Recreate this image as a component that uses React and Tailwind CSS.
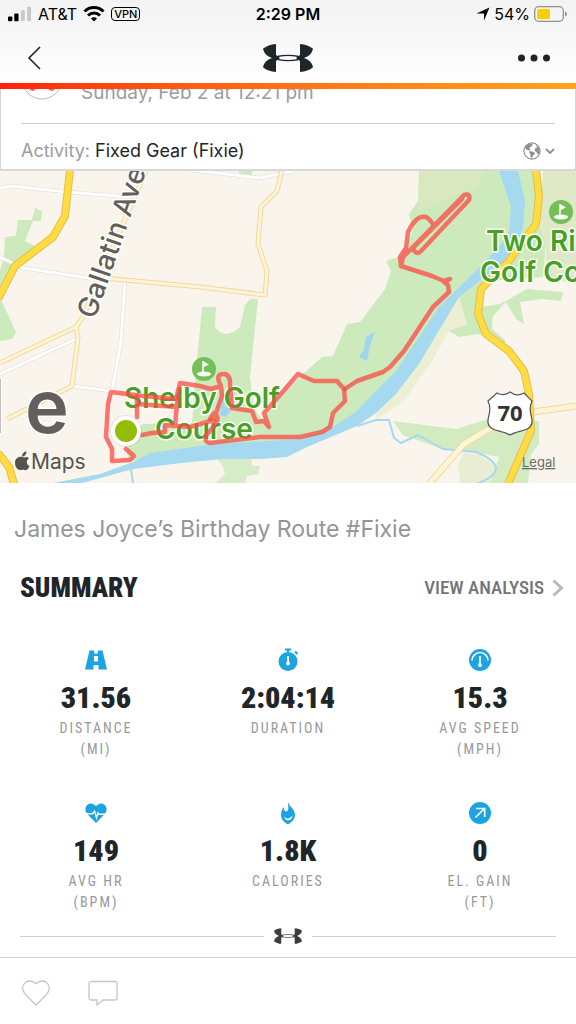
import React, { useState } from 'react';
import { LuHeart } from 'react-icons/lu';

// Under Armour logo, used in the header and in the section divider
const Logo = ({ className }) => (
    <svg viewBox="0 0 50 28" className={className} fill="currentColor" aria-hidden="true">
        <path d="M0 4.800C3.500 1.900 7.500.4 13 0v11l4 3-4 3v11C7.500 27.600 3.500 26.100 0 23.200 1 18.800 4 15.500 9 14 4 12.500 1 9.200 0 4.800Z" />
        <path d="M50 4.800C46.500 1.900 42.500.4 37 0v11l-4 3 4 3v11c5.500-.4 9.500-1.900 13-4.800-1-4.400-4-7.700-9-9.200 5-1.500 8-4.800 9-9.200Z" />
        <ellipse cx="25" cy="14" rx="12" ry="2.600" fill="none" stroke="currentColor" strokeWidth="1.300" />
    </svg>
);

const RoadIcon = () => (
    <svg viewBox="0 0 24 24" className="size-6" fill="#1ca4e2" aria-hidden="true">
        <path d="M5.500 2.500h4.700v3h3.600v-3h4.700l4.500 19h-8.500v-4.500h-5v4.500H1ZM10 8v5.500h4V8Z" fillRule="evenodd" />
    </svg>
);

const StopwatchIcon = () => (
    <svg viewBox="0 0 24 24" className="size-6" fill="none" aria-hidden="true">
        <circle cx="12" cy="13.500" r="9.500" fill="#1ca4e2" />
        <path d="M9 1.500h6M12 1.500v4M19 3.500l2.500 2.500" stroke="#1ca4e2" strokeWidth="2" />
        <path d="M12 8v7" stroke="#fff" strokeWidth="2" />
        <circle cx="12" cy="15.500" r="2" fill="#fff" />
    </svg>
);

const SpeedIcon = () => (
    <svg viewBox="0 0 24 24" className="size-6" fill="none" aria-hidden="true">
        <circle cx="12" cy="12" r="11" fill="#1ca4e2" />
        <path d="M4 12.500a8 8 0 0 1 16 0M12 8v9" stroke="#fff" strokeWidth="1.600" />
        <circle cx="12" cy="17" r="2" fill="#fff" />
    </svg>
);

const HeartRateIcon = () => (
    <svg viewBox="0 0 24 24" className="size-6" aria-hidden="true">
        <path d="M12 22 3.200 13C-1.500 7 4 .5 9.500 3.200L12 5l2.500-1.800C20 .5 25.500 7 20.800 13Z" fill="#1ca4e2" />
        <path d="M0 12.800h8.500l2-2.500 2 6.500 1.500-5 1 1.500H24" fill="none" stroke="#fff" strokeWidth="1.400" />
    </svg>
);

const FlameIcon = () => (
    <svg viewBox="0 0 24 24" className="size-6" aria-hidden="true">
        <path d="M12 1c1.500 5 7 7 7 13 0 5-4.500 7.500-7 9.500C9 21.500 5 19 5 14c0-3 1-6 3-8-.5 3 1 4.500 2.500 4.500C13.500 10 12 5 12 1Z" fill="#1ca4e2" />
        <path d="M8 15.500c2 3 6.500 2.500 8.500-1.500 0 4-2 5-4.500 5.500-2-.5-3.500-1.500-4-4Z" fill="#fff" />
    </svg>
);

const GainIcon = () => (
    <svg viewBox="0 0 24 24" className="size-6" fill="none" aria-hidden="true">
        <circle cx="12" cy="12" r="11" fill="#1ca4e2" />
        <path d="m7.500 16.500 9-9M8 7.500h8.700v8.500" stroke="#fff" strokeWidth="1.600" />
    </svg>
);

const STATS = [
    { value: '31.56', label: 'DISTANCE', unit: '(MI)', Icon: RoadIcon },
    { value: '2:04:14', label: 'DURATION', Icon: StopwatchIcon },
    { value: '15.3', label: 'AVG SPEED', unit: '(MPH)', Icon: SpeedIcon },
    { value: '149', label: 'AVG HR', unit: '(BPM)', Icon: HeartRateIcon },
    { value: '1.8K', label: 'CALORIES', Icon: FlameIcon },
    { value: '0', label: 'EL. GAIN', unit: '(FT)', Icon: GainIcon },
];

// map streets, drawn twice: casing first, then the fill
const WHITE_STREETS = 'M0 189L12 187L67 193L130 198M190 171L260 179L293 172M0 258L23 269L88 279M125 282L121 342L112 392M0 375L78 339M72 387L112 392';
const LOCAL_ROADS = 'M103 279L200 288L265 296L267 272L258 245L261 208L277 192L282 171M0 364L76 328L83 318L146 172M76 328L78 338L72 387L7 420';
const STATE_ROAD = 'M429 485L464 445L489 430L533 413L576 407';
const HIGHWAYS = 'M70 171L65 217L53 238L15 267L-2 300M536 171L539 198L536 225L509 262L481 290L478 315L486 335L509 352L524 372L529 395L531 432L508 485M-2 454L9 468L14 485';

const StatusBar = () => (
    <div className="grid grid-cols-3 items-center h-7 px-2 text-black">
        <div className="flex items-center gap-1.5">
            <svg viewBox="0 0 25 15" className="w-6 h-4" aria-hidden="true">
                <rect x="0" y="10" width="4.500" height="5" rx="1" />
                <rect x="6.500" y="7" width="4.500" height="8" rx="1" />
                <rect x="13.500" y="3.500" width="4" height="11.500" rx="1" fill="#c9c9c9" />
                <rect x="20" y="0" width="4" height="15" rx="1" fill="#c9c9c9" />
            </svg>
            <span className="text-base">AT&amp;T</span>
            <svg viewBox="0 0 21 16" className="w-[22px] h-4" fill="none" stroke="#000" strokeWidth="3" aria-hidden="true">
                <path d="M1 5.500a13.500 13.500 0 0 1 19 0M4.500 9.500a8.500 8.500 0 0 1 12 0" />
                <path d="m10.500 15.500-3-3a4.200 4.200 0 0 1 6 0Z" fill="#000" stroke="none" />
            </svg>
            <span className="border border-black rounded px-0.5 text-[11px] leading-3 font-medium">VPN</span>
        </div>
        <div className="text-center text-base font-semibold">2:29 PM</div>
        <div className="flex items-center justify-end gap-1">
            <svg viewBox="0 0 14 14" className="w-3.5 h-3.5" aria-hidden="true"><path d="M13.500.5 8 13.500V6.500H.5Z" /></svg>
            <span className="text-base">54%</span>
            <svg viewBox="0 0 34 16" className="w-[34px] h-4" aria-hidden="true">
                <rect x=".7" y=".7" width="28.600" height="14.600" rx="4" fill="none" stroke="#8f8f8f" strokeWidth="1.300" />
                <rect x="3" y="3" width="13" height="10" rx="1.500" fill="#ffcc00" />
                <path d="M31 5.500c2.500.5 2.500 4.500 0 5Z" fill="#8f8f8f" />
            </svg>
        </div>
    </div>
);

const GolfPin = ({ x, y }) => (
    <g transform={`translate(${x} ${y})`}>
        <circle r="12" fill="#74bf58" />
        <path d="M-1-8v12" stroke="#fff" strokeWidth="1.500" />
        <path d="m-1-8 6 3.500-6 3Z" fill="#fff" />
        <ellipse cy="5" rx="7" ry="2.500" fill="#fff" />
    </g>
);

const RouteMap = () => (
    <svg viewBox="0 172 576 312" className="block w-full h-auto bg-[#f9f5ec]" role="img" aria-label="Route map" fontFamily="Inter, 'Liberation Sans', sans-serif">
        {/* parks */}
        <g fill="#cdeabd">
            <path d="M35 209L42 212L41 222L33 222L25 242L35 247L15 267L0 292V272L4 257L5 238L16 237L18 221L32 221ZM3 305L16 333L12 340L0 342V300Z" />
            <path d="M202 308L216 308L215 328Q225 342 240 328L245 306L250 300L258 300L250 378L254 410L262 420L285 392L303 375L322 358L333 357L347 325L360 323L385 290L391 272L386 262L401 257L413 232L409 215L418 202L419 172H539L536 225L509 262L481 290L440 310L380 405L330 430L300 440L190 450L128 463L127 452L133 432L143 425L192 424L194 400L195 382Z" />
            <path d="M239 171H252V177L239 176Z" />
            <path d="M539 222L546 245L543 278L489 282L509 262ZM563 293L561 302L542 300L520 303L524 325L516 320L506 303L493 317L492 330L506 342L502 348L479 335L459 338L449 332L466 325L458 302L485 285L481 308L500 305L527 290Z" />
            <path d="M393 422L456 430L488 420L500 425L539 422V445L531 455L528 484H490L499 458L470 452L443 450L403 436Z" opacity=".9" />
            <path d="M217 460H251L252 467L260 467L258 475L247 477L245 484H215L225 475L223 467Z" opacity=".8" />
        </g>
        <path d="M419 172H484L476 189L440 202L418 212Z" fill="#d9e8bf" />
        <path d="M543 172H576V285L546 278L546 245L540 222Z" fill="#dfe8c7" />
        <path d="M459 298L467 325L449 332L432 362L404 402L376 421L376 412L419 365Z" fill="#edefd4" />
        <path d="M458 465L464 454L480 456L496 468L490 484H460Z" fill="#e9eed2" />

        {/* water */}
        <path d="M53 484L100 475L133 463L150 454L200 447L233 444L300 440L330 430L357 412L376 392L396 372L419 338L439 308L486 262L500 246L509 232L511 208L499 172H518L525 202L523 228Q518 252 493 272L459 298L419 365L396 395L376 414L357 427L307 448L287 458L260 460L223 460L190 463L133 470L82 484Z" fill="#a5d9ef" />
        <path d="M375 333L370 347L367 362L359 358L364 350L366 338ZM223 393L231 411L226 418L219 416L222 405Z" fill="#9fd6ee" />
        <path d="M357 427L376 421L389 421L394 439L401 444L418 436L443 450L476 453Q494 460 496 469Q496 478 476 485M131 470L133 484" fill="none" stroke="#a5d9ef" strokeWidth="2" />

        {/* streets */}
        <g fill="none" strokeLinejoin="round">
            <path d={WHITE_STREETS} stroke="#dedbd6" strokeWidth="4" />
            <path d={WHITE_STREETS} stroke="#fff" strokeWidth="3" />
            <path d={LOCAL_ROADS} stroke="#f0d8a2" strokeWidth="5" />
            <path d={STATE_ROAD} stroke="#f0d8a2" strokeWidth="7" />
            <path d={LOCAL_ROADS} stroke="#fff5d3" strokeWidth="3" />
            <path d={STATE_ROAD} stroke="#fff5d3" strokeWidth="5" />
            <path d={HIGHWAYS} stroke="#e8bc4a" strokeWidth="8" />
            <path d={HIGHWAYS} stroke="#ffdc42" strokeWidth="6" />
        </g>

        {/* labels */}
        <g fill="#625f5c" stroke="#fff" strokeWidth="3" strokeLinejoin="round" paintOrder="stroke">
            <text transform="translate(95 321) rotate(-71)" fontSize="28" fontWeight="500">Gallatin Ave</text>
            <text x="-14" y="434" fontSize="74" fontWeight="600">l</text>
            <text x="25" y="434" fontSize="74" fontWeight="600">e</text>
        </g>
        <GolfPin x={204} y={370} />
        <GolfPin x={561} y={213} />
        <g fill="#47a025" stroke="#fbfdf4" strokeWidth="3" strokeLinejoin="round" paintOrder="stroke" fontWeight="600" fontSize="28">
            <text x="124" y="409">Shelby Golf</text>
            <text x="155" y="440">Course</text>
            <text x="486" y="252">Two Ri</text>
            <text x="480" y="283">Golf Co</text>
        </g>

        {/* highway shield */}
        <path d="M497 394c5 3 9 2 13-1 4 3 9 4 14 1l8 8c-5 10 1 15 0 22-2 9-14 7-22 12-8-5-20-3-22-12-1-7 5-12 0-22Z" fill="#fff" stroke="#555" strokeWidth="1.200" />
        <text x="510" y="422" textAnchor="middle" fontSize="22" fontWeight="700" fill="#333" fontFamily="'Open Sans', sans-serif">70</text>

        {/* recorded route */}
        <g fill="none" stroke="#fb4944" strokeOpacity=".75" strokeWidth="4.500" strokeLinejoin="round" strokeLinecap="round">
            <path d="M126 450L134 457L130 461L112 462L112 450L106 438L108 405L111 393L143 397L176 400L180 384L200 387L211 390L221 387Q214 374 225 375Q231 377 230 387L232 409L252 412L256 423L264 422L269 428L264 414L280 396L298 375L314 382L337 382L344 390L345 402L333 414L330 428L322 433L300 438L260 438L210 444Q204 443 206 437L216 424Q220 418 214 414L210 420L216 414L222 397L221 387" />
            <path d="M142 436L152 434L165 433L165 426L190 428L214 421M137 397V418M138 405L176 408M178 396L175 426M345 390L357 382L383 373L390 368L404 352L433 308L449 293L448 286L444 283L450 280L444 282L432 277L401 267L403 258L416 245L464 196Q471 194 469 201L421 252Q416 257 413 249L434 228L462 200M401 267L400 258L406 249L408 233Q416 216 426 218Q430 220 434 227" />
        </g>
        <circle cx="126" cy="432" r="16" fill="#777" opacity=".15" />
        <circle cx="126" cy="432" r="15" fill="#fff" />
        <circle cx="126" cy="432" r="11" fill="#94bd08" />

        {/* attribution */}
        <path d="M24 458.500c2-1 4-.5 5 1-3 1.500-3 6 .5 7.500-1.500 4-4 5-6.500 3.500-5 2-8-2-8-7 0-4 4-7 9-5Zm-2-1c0-3 2-5 4.500-5 0 3-2 5-4.500 5Z" fill="#55534f" />
        <text x="31" y="470" fontSize="21" fill="#55534f">Maps</text>
        <text x="522" y="468" fontSize="13" fill="#6d6b66" textDecoration="underline">Legal</text>
    </svg>
);

const App = () => {
    const [liked, setLiked] = useState(false);

    return (
        <div className="min-h-screen flex flex-col bg-white text-[#1f2629] font-[Inter,'Liberation_Sans',sans-serif]">
            <header className="bg-linear-to-b from-[#f3f3f3] to-white">
                <StatusBar />
                <nav className="grid grid-cols-3 items-center h-[55px] pt-1 px-6">
                    <button type="button" aria-label="Back" className="justify-self-start">
                        <svg viewBox="0 0 20 24" className="w-5 h-6" fill="none" stroke="currentColor" strokeWidth="1.600" aria-hidden="true"><path d="M16 1 5 12l11 11" /></svg>
                    </button>
                    <Logo className="w-[50px] h-7 justify-self-center" />
                    <button type="button" aria-label="More options" className="justify-self-end">
                        <svg viewBox="0 0 36 8" className="w-9 h-2" fill="currentColor" aria-hidden="true">
                            <circle cx="5.500" cy="4" r="3.500" /><circle cx="18" cy="4" r="3.500" /><circle cx="30.500" cy="4" r="3.500" />
                        </svg>
                    </button>
                </nav>
                <div className="h-1.5 bg-linear-to-r from-[#ff1e0c] to-[#ffa41c]"></div>
            </header>

            <main className="flex-1">
                <section className="border-x border-b-2 border-[#d8d8dc] px-5">
                    {/* the top of this row is scrolled under the header */}
                    <div className="flex items-end gap-4 h-[35px] overflow-hidden border-b border-[#cfcfd3] pb-4.5 text-[#9b9ca3]">
                        <svg viewBox="0 0 44 48" className="w-11 h-12 shrink-0" aria-hidden="true">
                            <circle cx="21" cy="22" r="20" fill="#fff" stroke="#b9b9bd" />
                            <path d="M8 32q4 4 7 0M27 32q4 4 7 0" fill="#f8646a" />
                        </svg>
                        <p className="text-[19px] leading-6">Sunday, Feb 2 at 12:21 pm</p>
                    </div>
                    <div className="flex items-center justify-between h-[45px] pt-2">
                        <p className="text-lg leading-6"><span className="text-[#9b9ca3]">Activity:</span> Fixed Gear (Fixie)</p>
                        <button type="button" aria-label="Privacy" className="flex items-center gap-1 text-[#8e8f94]">
                            <svg viewBox="0 0 20 20" className="w-[18px] h-[18px]" aria-hidden="true">
                                <circle cx="10" cy="10" r="9" fill="none" stroke="currentColor" strokeWidth="1.200" />
                                <path d="M2 6 6 2l5 .5-1 2-2 1-1 2 2 1-2 1-3-1ZM8 10l4 1 1.500 2-2.500 2-1 3-1.500-1-.5-4-1-1ZM14 3l4 4 .5 5-2 2-1.500-3-2-1 .5-3 2-.5Z" fill="currentColor" />
                            </svg>
                            <svg viewBox="0 0 10 8" className="w-2.5 h-2" fill="none" stroke="currentColor" strokeWidth="1.800" aria-hidden="true"><path d="m1 2 4 4 4-4" /></svg>
                        </button>
                    </div>
                </section>

                <RouteMap />

                <h1 className="px-3.5 pt-7 text-[23px] leading-9 text-[#94959c]">James Joyce’s Birthday Route #Fixie</h1>

                <section className="font-['Roboto_Condensed','Liberation_Sans_Narrow','Liberation_Sans',sans-serif]">
                    <div className="flex items-center justify-between pt-[25px] pl-5 pr-3">
                        <h2 className="text-[27px] leading-8 font-black">SUMMARY</h2>
                        <a href="#analysis" className="flex items-center gap-2 text-[19px] leading-8 font-medium text-[#737478]">
                            VIEW ANALYSIS
                            <svg viewBox="0 0 12 18" className="w-3 h-[18px]" fill="none" stroke="#b9b9bc" strokeWidth="3" aria-hidden="true"><path d="m1.500 1.500 8 7.500-8 7.500" /></svg>
                        </a>
                    </div>

                    <ul className="grid grid-cols-3 gap-y-[41px] pt-11">
                        {STATS.map(({ value, label, unit, Icon }) => (
                            <li key={label} className="flex flex-col items-center text-center">
                                <Icon />
                                <strong className="pt-1.5 text-3xl leading-10 font-black">{value}</strong>
                                <span className="text-sm leading-[21px] tracking-[2px] text-[#98999c]">{label}</span>
                                {unit && <span className="text-sm leading-[21px] tracking-[2px] text-[#98999c]">{unit}</span>}
                            </li>
                        ))}
                    </ul>
                </section>

                <div className="flex items-center gap-2.5 px-5 pt-[15px] pb-3">
                    <div className="flex-1 h-px bg-[#cfcfcf]"></div>
                    <Logo className="w-7 h-4 text-[#3b3d3f]" />
                    <div className="flex-1 h-px bg-[#cfcfcf]"></div>
                </div>
            </main>

            <footer className="flex items-center gap-9 border-t border-[#cfcfcf] h-[67px] px-5 pt-1 text-[#c6c6c6]">
                <button type="button" aria-label="Like" aria-pressed={liked} onClick={() => setLiked(!liked)}>
                    <LuHeart className="size-8" strokeWidth={1} />
                </button>
                <button type="button" aria-label="Comment">
                    <svg viewBox="0 0 30 26" className="w-[30px] h-[26px]" fill="none" stroke="currentColor" strokeWidth="1.300" aria-hidden="true">
                        <path d="M3 1.500h24a2 2 0 0 1 2 2V18a2 2 0 0 1-2 2H15l-6 5v-5H3a2 2 0 0 1-2-2V3.500a2 2 0 0 1 2-2Z" />
                    </svg>
                </button>
            </footer>
        </div>
    );
};

export default App;
